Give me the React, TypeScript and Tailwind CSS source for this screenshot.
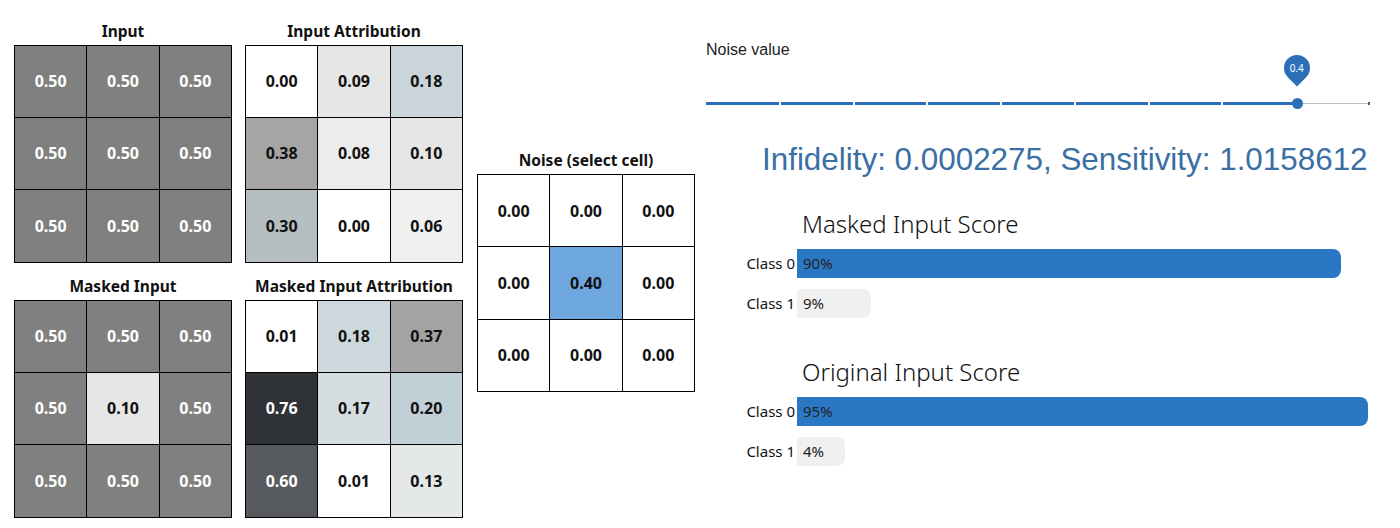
import React from "react";

type Cell = { v: string; bg: string; light?: boolean };

const input: Cell[] = Array.from({ length: 9 }, () => ({ v: "0.50", bg: "bg-[#808080]", light: true }));

const inputAttr: Cell[] = [
  { v: "0.00", bg: "bg-white" },
  { v: "0.09", bg: "bg-[#e6e6e6]" },
  { v: "0.18", bg: "bg-[#c9d5da]" },
  { v: "0.38", bg: "bg-[#a5a5a5]" },
  { v: "0.08", bg: "bg-[#ececec]" },
  { v: "0.10", bg: "bg-[#e6e6e6]" },
  { v: "0.30", bg: "bg-[#b5bec1]" },
  { v: "0.00", bg: "bg-white" },
  { v: "0.06", bg: "bg-[#f0f0f0]" },
];

const masked: Cell[] = input.map((c, i) => (i === 4 ? { v: "0.10", bg: "bg-[#e6e6e6]" } : c));

const maskedAttr: Cell[] = [
  { v: "0.01", bg: "bg-white" },
  { v: "0.18", bg: "bg-[#ccd8dc]" },
  { v: "0.37", bg: "bg-[#a3a3a3]" },
  { v: "0.76", bg: "bg-[#2f3236]", light: true },
  { v: "0.17", bg: "bg-[#d4dde0]" },
  { v: "0.20", bg: "bg-[#c1d0d6]" },
  { v: "0.60", bg: "bg-[#56595d]", light: true },
  { v: "0.01", bg: "bg-white" },
  { v: "0.13", bg: "bg-[#e5e8e8]" },
];

const noise: Cell[] = Array.from({ length: 9 }, (_, i) =>
  i === 4 ? { v: "0.40", bg: "bg-[#6ea6de]" } : { v: "0.00", bg: "bg-white" }
);

function Panel({ title, cells }: { title: string; cells: Cell[] }) {
  return (
    <div className="flex flex-col items-center">
      <div className="mb-[4px] text-[15.5px] font-bold leading-[20px] text-[#111]">{title}</div>
      <div className="grid h-[218px] w-[218px] grid-cols-3 grid-rows-3 gap-px bg-black p-px">
        {cells.map((c, i) => (
          <div
            key={i}
            className={`flex items-center justify-center text-[16px] font-bold ${c.bg} ${
              c.light ? "text-white" : "text-[#111]"
            }`}
          >
            {c.v}
          </div>
        ))}
      </div>
    </div>
  );
}

type Bar = { label: string; pct: string; width: number; on?: boolean };

function Scores({ title, bars }: { title: string; bars: Bar[] }) {
  return (
    <div>
      <div className="ml-[96px] text-[24px] font-light leading-[32px] text-[#111]">{title}</div>
      <div className="mt-[9px] flex flex-col gap-[11px]">
        {bars.map((b) => (
          <div key={b.label} className="flex items-center">
            <div className="w-[91px] pr-[2px] text-right text-[15px] text-[#111]">{b.label}</div>
            <div
              className={`flex h-[29px] items-center rounded-r-[8px] pl-[6px] text-[15px] text-[#222] ${
                b.on ? "bg-[#2a78c4]" : "bg-[#f0f0f0]"
              }`}
              style={{ width: b.width }}
            >
              {b.pct}
            </div>
          </div>
        ))}
      </div>
    </div>
  );
}

function NoiseSlider() {
  const ticks = [1, 2, 3, 4, 5, 6, 7, 8];
  const step = 664 / 9;
  return (
    <div className="relative mt-[37px] h-[14px] w-[664px]">
      <div className="absolute left-0 top-[6px] h-[1px] w-full bg-[#b9c2c8]" />
      <div className="absolute left-0 top-[5px] h-[3px] w-[591px] bg-[#2a6fb8]" />
      {ticks.map((t) => (
        <div key={t} className="absolute top-[5px] h-[3px] w-[2px] bg-white" style={{ left: t * step - 1 }} />
      ))}
      <div className="absolute right-0 top-[5px] h-[3px] w-[2px] bg-[#555]" />
      <div className="absolute left-[586px] top-[1px] h-[11px] w-[11px] rounded-full bg-[#2a6fb8]" />
      <div className="absolute left-[578px] top-[-42px] flex h-[26px] w-[26px] rotate-45 items-center justify-center rounded-[50%_50%_0_50%] bg-[#2a6fb8]">
        <span className="-rotate-45 text-[10px] text-white">0.4</span>
      </div>
    </div>
  );
}

export default function App() {
  return (
    <div className="flex h-[528px] w-[1400px] bg-white" style={{ fontFamily: '"Noto Sans", sans-serif' }}>
      <div className="flex items-center pl-[14px]">
        <div className="grid grid-cols-2 gap-x-[13px] gap-y-[13px] pt-[10px]">
          <Panel title="Input" cells={input} />
          <Panel title="Input Attribution" cells={inputAttr} />
          <Panel title="Masked Input" cells={masked} />
          <Panel title="Masked Input Attribution" cells={maskedAttr} />
        </div>
        <div className="ml-[14px] mt-[14px]">
          <Panel title="Noise (select cell)" cells={noise} />
        </div>
      </div>
      <div className="ml-[11px] flex flex-1 flex-col pt-[40px]">
        <div className="text-[16px] leading-[20px] text-[#222]" style={{ fontFamily: '"Liberation Sans", Arial, sans-serif' }}>
          Noise value
        </div>
        <NoiseSlider />
        <div
          className="ml-[56px] mt-[31px] whitespace-nowrap text-[31.4px] leading-[36px] text-[#3a6fa6]"
          style={{ fontFamily: '"Liberation Sans", Arial, sans-serif' }}
        >
          Infidelity: 0.0002275, Sensitivity: 1.0158612
        </div>
        <div className="mt-[30px]">
          <Scores
            title="Masked Input Score"
            bars={[
              { label: "Class 0", pct: "90%", width: 544, on: true },
              { label: "Class 1", pct: "9%", width: 74 },
            ]}
          />
        </div>
        <div className="mt-[38px]">
          <Scores
            title="Original Input Score"
            bars={[
              { label: "Class 0", pct: "95%", width: 571, on: true },
              { label: "Class 1", pct: "4%", width: 48 },
            ]}
          />
        </div>
      </div>
    </div>
  );
}
